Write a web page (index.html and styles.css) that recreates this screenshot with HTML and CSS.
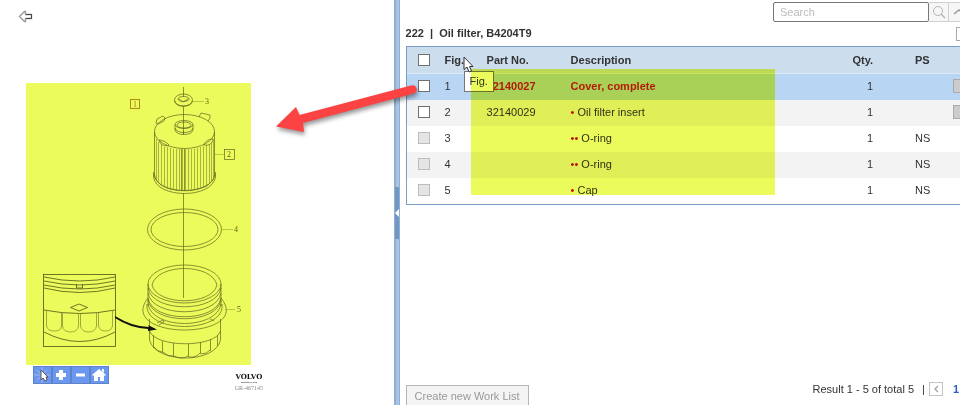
FILE: index.html
```html
<!DOCTYPE html>
<html lang="en">
<head>
    <meta charset="UTF-8">
    <meta name="viewport" content="width=device-width, initial-scale=1.0">
    <title>Oil filter, B4204T9</title>
    <link rel="stylesheet" href="styles.css">
</head>
<body>
    <div class="page">
        <section class="illustration">
            <button type="button" class="back" aria-label="Back">
                <svg width="15" height="13" viewBox="0 0 15 13"><path d="M6.5 1.5h1v3h6v4h-6v3h-1l-5-5z" fill="#fff" stroke="#999" stroke-width="1.4"/><path d="M8 4.500h5.500v4H8" fill="none" stroke="#444"/></svg>
            </button>

            <svg class="drawing" width="225" height="282" viewBox="26 83 225 282">
                <g class="lines">
                    <path d="M183.500 87v10M183.500 106v28M183.500 193v105"/>
                    <!-- seal -->
                    <ellipse cx="183.500" cy="100" rx="9" ry="6"/>
                    <ellipse cx="183.500" cy="99" rx="5.500" ry="2.500"/>
                    <path d="M174.500 101c1 7 17 7 18 0M179 99l4 3 5-3"/>
                    <!-- filter insert -->
                    <ellipse cx="184.500" cy="131.500" rx="30" ry="17"/>
                    <ellipse cx="184" cy="124.500" rx="9" ry="4"/>
                    <ellipse cx="184" cy="125" rx="7" ry="3"/>
                    <path d="M175 125v5c1 6 17 6 18 0v-5M175 128c1 6 17 6 18 0M183.500 131v4"/>
                    <path d="M154.500 132v43c2 21 58 21 60 0v-43M153.500 172v5c3 22 59 22 62 0v-5M154 174c2 22 59 22 61 0"/>
                    <path d="M156 123l1-4 6-3 2 2-1 3-6 3zM199 117l2-4 9 2 0 3-2 3M159 140c3 0 8 2 10 5-4 2-9 0-10-5zM204 145c1-4 5-6 9-6 0 4-4 7-9 6z"/>
                    <path class="fins" d="M156.500 139v42M158.500 142v41M161.500 144v41M164.500 147v40M167.500 147v42M170.500 148v42M173.500 149v41M176.500 149v42M179.500 149v42M182.500 149v42M185.500 149v42M188.500 149v42M191.500 149v42M194.500 149v41M197.500 148v42M200.500 147v42M203.500 146v42M206.500 145v42M209.500 144v40M211.500 142v40M213.500 139v40"/>
                    <path d="M181.500 149v42M184.500 149v42"/>
                    <!-- o-ring -->
                    <ellipse cx="184.500" cy="229.500" rx="37" ry="20.500"/>
                    <ellipse cx="184.500" cy="229.500" rx="33.500" ry="17"/>
                    <!-- cap -->
                    <ellipse cx="184.500" cy="284" rx="36.500" ry="19"/>
                    <path d="M152 285c5-22 60-22 65 0M152 285c5 21 60 21 65 0"/>
                    <path d="M148 284v22M221 284v22M148 288c4 25 69 25 73 0M148 293c4 25 69 25 73 0M148 298c4 25 69 25 73 0M148 300c4 25 69 25 73 0M148 304c4 26 69 26 73 0"/>
                    <path d="M148 298c-16 20 8 32 36.500 32s53-12 36.500-32M147 304c-4 30 79 30 75 0"/>
                    <path d="M149.500 319v21c6 24 66 24 71 0v-21M149.500 331c6 17 66 17 71 0"/>
                    <path d="M153.500 335v13M162.500 341v12M173.500 343v14M188.500 344v13M200.500 342v12M210.500 339v12M217.500 335v11M154 347q4 5 8 5M163 352q5 5 10 4M174 356q8 4 14 0M189 357q7 1 11-4M201 354q6 0 9-4M157 323l6-3 1 2-5 3M210 319l4 2"/>
                    <path class="leader" d="M193 101.500h11M215 154.500h9M222 229.500h11M225 309.500h10"/>
                    <rect x="224.500" y="149.500" width="10" height="10"/>
                </g>
                <rect class="mark" x="130.500" y="99.500" width="9" height="9"/>
                <g class="detail">
                    <rect x="43.500" y="274.500" width="72" height="72"/>
                    <path d="M44 277q36 8 71 0M44 281q36 8 71 0M44 285q36 8 71 0M44 288q36 9 71 0M76.500 284v4h6v-4M44 310q36 7 71 0M44 332q36 19 71 0"/>
                    <path d="M70.500 307.500l8.500-3.500 8.500 3.500-8.500 3.500z"/>
                    <path class="fins" d="M46.500 311v15q1 5 8 5t7-5v-13M62.500 313v13q1 6 8 6t8-6v-12M80.500 314v12q1 6 8 6t8-6v-13M98.500 313v13q1 5 7 5t7-5v-15"/>
                </g>
                <path class="pointer" d="M115 316q18 11 34 11l-1-2 9 4.500-9 1.500 0-2q-18-1-33-11z"/>
                <g class="callouts">
                    <text class="callout-mark" x="133" y="107">1</text>
                    <text x="205" y="104">3</text>
                    <text x="227" y="157">2</text>
                    <text x="234" y="232">4</text>
                    <text x="237" y="312">5</text>
                </g>
            </svg>

            <div class="below">
                <div class="tools">
                    <button type="button" class="tool" aria-label="Select">
                        <svg width="18" height="18" viewBox="0 0 18 18"><path d="M9 1v16M1 9h16M4 4l10 10M14 4L4 14" stroke="#a6bce6"/><path d="M8 4v10l2-2 2 3 2-1-1-3h2z" fill="#fff" stroke="#555"/></svg>
                    </button>
                    <button type="button" class="tool" aria-label="Zoom in">
                        <svg width="18" height="18" viewBox="0 0 18 18"><path d="M9 4v10M4 9h10" stroke="#fff" stroke-width="4"/></svg>
                    </button>
                    <button type="button" class="tool" aria-label="Zoom out">
                        <svg width="18" height="18" viewBox="0 0 18 18"><path d="M5 9h9" stroke="#fff" stroke-width="3"/></svg>
                    </button>
                    <button type="button" class="tool" aria-label="Home">
                        <svg width="18" height="18" viewBox="0 0 18 18"><path d="M9 3l7 6-1 1-1-1v6h-4v-4H8v4H4V9l-1 1-1-1zM12 3h2v4l-2-2z" fill="#fff"/></svg>
                    </button>
                </div>
                <div class="brand">
                    <div class="brand-name">VOLVO</div>
                    <div class="brand-sub">GENUINE PARTS</div>
                    <div class="brand-code">GR-467145</div>
                </div>
            </div>
        </section>

        <div class="splitter">
            <button type="button" class="collapse" aria-label="Collapse">
                <svg width="4" height="8" viewBox="0 0 4 8"><path d="M4 0v8L0 4z" fill="#fff"/></svg>
            </button>
        </div>

        <section class="parts">
            <div class="content">
                <form class="search">
                    <input type="text" class="search-text" placeholder="Search" aria-label="Search">
                    <button type="button" class="search-btn" aria-label="Search">
                        <svg width="14" height="14" viewBox="0 0 14 14"><circle cx="6" cy="6" r="4.500" fill="none" stroke="#b5b5b5"/><path d="M9 9l4 4" stroke="#b5b5b5" stroke-width="1.500"/></svg>
                    </button>
                    <button type="button" class="search-btn" aria-label="Hide search">
                        <svg width="12" height="8" viewBox="0 0 12 8"><path d="M1 6l5-4 5 4" fill="none" stroke="#999" stroke-width="1.500"/></svg>
                    </button>
                </form>

                <div class="heading">
                    <h1>222 &nbsp;|&nbsp; Oil filter, B4204T9</h1>
                    <button type="button" class="option" aria-label="Options"></button>
                </div>

                <div class="list">
                    <table>
                        <thead>
                            <tr>
                                <th class="check"><input type="checkbox" aria-label="Select all"></th>
                                <th class="fig">Fig.</th>
                                <th class="part">Part No.</th>
                                <th>Description</th>
                                <th class="qty">Qty.</th>
                                <th class="ps">PS</th>
                                <th class="action"></th>
                            </tr>
                        </thead>
                        <tbody>
                            <tr class="selected">
                                <td class="check"><input type="checkbox" aria-label="Select 1"></td>
                                <td>1</td>
                                <td>32140027</td>
                                <td>Cover, complete</td>
                                <td class="qty">1</td>
                                <td class="ps"></td>
                                <td><button type="button" class="add" aria-label="Add 1"></button></td>
                            </tr>
                            <tr>
                                <td class="check"><input type="checkbox" aria-label="Select 2"></td>
                                <td>2</td>
                                <td>32140029</td>
                                <td><span class="dot">•</span> Oil filter insert</td>
                                <td class="qty">1</td>
                                <td class="ps"></td>
                                <td><button type="button" class="add" aria-label="Add 2"></button></td>
                            </tr>
                            <tr>
                                <td class="check"><input type="checkbox" aria-label="Select 3" disabled></td>
                                <td>3</td>
                                <td></td>
                                <td><span class="dot">••</span> O-ring</td>
                                <td class="qty">1</td>
                                <td class="ps">NS</td>
                                <td></td>
                            </tr>
                            <tr>
                                <td class="check"><input type="checkbox" aria-label="Select 4" disabled></td>
                                <td>4</td>
                                <td></td>
                                <td><span class="dot">••</span> O-ring</td>
                                <td class="qty">1</td>
                                <td class="ps">NS</td>
                                <td></td>
                            </tr>
                            <tr>
                                <td class="check"><input type="checkbox" aria-label="Select 5" disabled></td>
                                <td>5</td>
                                <td></td>
                                <td><span class="dot">•</span> Cap</td>
                                <td class="qty">1</td>
                                <td class="ps">NS</td>
                                <td></td>
                            </tr>
                        </tbody>
                    </table>
                    <div class="tooltip">Fig.</div>
                    <div class="highlight"></div>
                    <svg class="cursor" width="12" height="18" viewBox="0 0 12 18"><path d="M1 1v12.500l3-2.500 2 5 2.500-1-2-4.500H10z" fill="#fff" stroke="#333"/></svg>
                </div>

                <div class="footer">
                    <button type="button" class="worklist" disabled>Create new Work List</button>
                    <div class="pager">
                        <span>Result 1 - 5 of total 5</span>
                        <span>|</span>
                        <button type="button" class="prev" aria-label="Previous page" disabled>
                            <svg width="6" height="8" viewBox="0 0 6 8"><path d="M5 1L2 4l3 3" fill="none" stroke="#aaa" stroke-width="1.500"/></svg>
                        </button>
                        <a href="#" class="current">1</a>
                    </div>
                </div>
            </div>
        </section>

        <svg class="arrow" width="150" height="60" viewBox="270 80 150 60">
            <path d="M276 126.500L296 107l3.500 8L411 85.500a4 4 0 0 1 3 8L303 123l1 9z" fill="#fb4343"/>
        </svg>
    </div>
</body>
</html>
```
FILE: styles.css
```css
* {
    margin: 0;
    padding: 0;
    box-sizing: border-box;
}

body {
    font-family: "Liberation Sans", Arial, sans-serif;
    font-size: 11px;
    color: #333;
    background-color: #fff;
}

button,
input {
    font-family: inherit;
    font-size: inherit;
    color: inherit;
}

svg {
    display: block;
}

.page {
    position: relative;
    display: flex;
    height: 100vh;
    overflow: hidden;
}

/* left side */
.illustration {
    flex: 0 0 41%;
    padding: 10px 0 0 26px;
    overflow: hidden;
}

.back {
    display: block;
    height: 13px;
    margin: 0 0 60px -8px;
    border: none;
    background: none;
}

.drawing {
    background-color: #ebfb5b;
}

.lines {
    fill: none;
    stroke: #5f661f;
    stroke-width: 0.7;
}

.fins {
    stroke: #8c9630;
}

.leader {
    stroke: #a5b03c;
}

.mark {
    fill: none;
    stroke: #b08a10;
}

.detail {
    fill: none;
    stroke: #4e5416;
    stroke-width: 0.8;
}

.pointer {
    fill: #111;
}

.callouts {
    font-family: "Liberation Serif", serif;
    font-size: 8px;
    fill: #5d6420;
}

.callout-mark {
    fill: #a87c10;
}

.below {
    display: flex;
    justify-content: space-between;
    width: 237px;
    padding-left: 7px;
}

.tools {
    display: flex;
    padding-top: 1px;
}

.tool {
    width: 19px;
    height: 18px;
    border: 1px solid #5f83c6;
    background-color: #6a98f0;
    overflow: hidden;
}

.tool svg {
    margin: -1px 0 0 -1px;
}

.brand {
    padding-top: 8px;
    text-align: center;
    font-family: "DejaVu Serif", serif;
}

.brand-name {
    font-size: 7px;
    line-height: 8px;
    font-weight: bold;
    color: #111;
}

.brand-sub {
    font-family: "Liberation Sans", sans-serif;
    font-size: 2px;
    line-height: 3px;
    font-weight: bold;
}

.brand-code {
    font-family: "Liberation Serif", serif;
    font-size: 6px;
    line-height: 8px;
    color: #888;
}

/* splitter */
.splitter {
    display: flex;
    align-items: center;
    flex: 0 0 6px;
    padding-top: 20px;
    border-left: 2px solid #8fb0d4;
    border-right: 1px solid #8fb0d4;
    background-color: #a9c4e2;
}

.collapse {
    flex: 0 0 4px;
    height: 52px;
    margin-left: -1px;
    border: none;
    background-color: #7098c3;
}

/* right side */
.parts {
    flex: 1;
    min-width: 0;
    padding-left: 6px;
    overflow: hidden;
}

.content {
    display: flex;
    flex-direction: column;
    width: calc(100% + 24px);
    height: 100%;
    padding-top: 2px;
}

.search {
    display: flex;
    justify-content: flex-end;
    padding-right: 15px;
}

.search-text {
    width: 156px;
    height: 20px;
    padding: 1px 6px;
    border: 1px solid #777;
    border-radius: 2px;
}

.search-text::placeholder {
    color: #bbb;
}

.search-btn {
    display: flex;
    align-items: center;
    justify-content: center;
    width: 20px;
    height: 20px;
    border: 1px solid #d0d0d0;
    border-left: none;
    background-color: #f6f6f6;
}

.heading {
    display: flex;
    align-items: flex-start;
    justify-content: space-between;
    height: 14px;
    margin: 5px 0;
}

h1 {
    font-size: 11px;
    line-height: 12px;
}

.option {
    width: 28px;
    height: 14px;
    border: 1px solid #aaa;
    background-color: #fff;
}

.list {
    position: relative;
    border: 1px solid #7b9cc4;
}

table {
    width: 100%;
    table-layout: fixed;
    border-collapse: separate;
    border-spacing: 0;
}

th,
td {
    height: 26px;
    padding-bottom: 2px;
    text-align: left;
    vertical-align: middle;
}

th {
    height: 27px;
    padding-bottom: 1px;
    background-color: #ccddee;
    border-bottom: 1px solid #dce8f4;
}

tbody tr:nth-child(even) {
    background-color: #f3f3f3;
}

tbody tr.selected {
    background-color: #b8d5f3;
}

.selected td:nth-child(3),
.selected td:nth-child(4) {
    font-weight: bold;
    color: #c41a1a;
}

.check {
    width: 38px;
    padding-left: 11px;
}

.fig {
    width: 42px;
}

.part {
    width: 84px;
}

th.qty {
    width: 48px;
}

.qty {
    text-align: right;
}

th.ps {
    width: 80px;
}

.ps {
    padding-left: 42px;
}

.action {
    width: 30px;
}

input[type="checkbox"] {
    display: block;
    appearance: none;
    width: 12px;
    height: 12px;
    border: 1px solid #707070;
    background-color: #fff;
}

input[type="checkbox"]:disabled {
    border-color: #bcbcbc;
    background-color: #e4e4e4;
}

.dot {
    color: #d01010;
}

.add {
    display: block;
    width: 24px;
    height: 14px;
    border: 1px solid #aaa;
    background-color: #ccc;
}

.tooltip {
    position: absolute;
    top: 24px;
    left: 57px;
    padding: 3px 5px;
    border: 1px solid #767676;
    background-color: #fff;
    line-height: 13px;
}

.highlight {
    position: absolute;
    top: 22px;
    left: 64px;
    width: 304px;
    height: 126px;
    background-color: #ebfb5b;
    mix-blend-mode: multiply;
}

.cursor {
    position: absolute;
    top: 9px;
    left: 56px;
}

.footer {
    display: flex;
    align-items: flex-start;
    justify-content: space-between;
    margin-top: auto;
    margin-bottom: -2px;
    padding-right: 25px;
}

.worklist {
    height: 22px;
    margin-top: 3px;
    padding: 0 8px;
    border: 1px solid #b5b5b5;
    background-color: #f4f4f4;
    color: #999;
}

.pager {
    display: flex;
    align-items: center;
    gap: 8px;
}

.prev {
    display: flex;
    align-items: center;
    justify-content: center;
    width: 14px;
    height: 14px;
    margin-left: -4px;
    border: 1px solid #c4c4c4;
    background-color: #fff;
}

.current {
    margin-left: 2px;
    font-weight: bold;
    color: #2b62c4;
    text-decoration: none;
}

.arrow {
    position: absolute;
    top: 80px;
    left: calc(41% - 124px);
    overflow: visible;
    filter: drop-shadow(1px 3px 2px rgba(0, 0, 0, 0.4));
}
```
